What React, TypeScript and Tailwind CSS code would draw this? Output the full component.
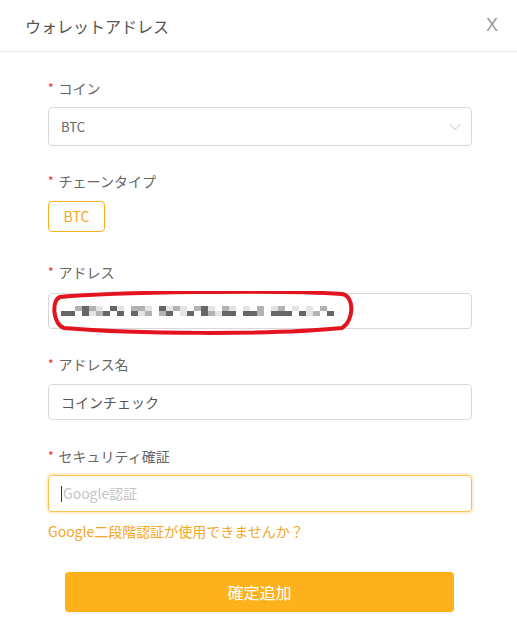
import React from 'react'

const font = { fontFamily: '"Noto Sans CJK JP", "Noto Sans", sans-serif' }

// blurred address: two rows of grey pixel blocks
const topRow = [0, 0, 2, 3, 2, 1, 0, 3, 1, 0, 2, 2, 1, 0, 3, 1, 2, 1, 0, 2, 3, 1, 0, 2, 1, 0, 1, 0, 2, 0, 1, 2, 0, 1, 0, 1, 0, 2]
const botRow = [3, 3, 0, 3, 1, 2, 3, 0, 3, 0, 3, 1, 2, 0, 2, 3, 0, 1, 3, 0, 3, 2, 1, 3, 3, 0, 3, 3, 2, 0, 3, 3, 3, 0, 3, 1, 2, 0, 3]
const shade = ['bg-transparent', 'bg-[#e4e4e4]', 'bg-[#b3b3b3]', 'bg-[#666666]']

function Label({ text }: { text: string }) {
  return (
    <div className="flex items-center h-5 text-[14px] text-[#666]">
      <span className="text-[#f5222d] text-[12px] mr-[5px]">*</span>
      {text}
    </div>
  )
}

export default function App() {
  return (
    <div className="w-[517px] h-[638px] bg-white overflow-hidden" style={font}>
      <div className="h-[52px] flex items-center justify-between pl-[25px] pr-[19px] border-b border-[#ebebeb]">
        <span className="text-[16px] text-[#555]">ウォレットアドレス</span>
        <span className="text-[18px] text-[#999]" style={{ fontFamily: '"Liberation Sans", sans-serif' }}>X</span>
      </div>

      <div className="pl-[48px] pr-[45px] pt-[26px]">
        <Label text="コイン" />
        <div className="mt-[9px] h-[39px] border border-[#d9d9d9] rounded-[4px] flex items-center justify-between pl-[12px] pr-[10px]">
          <span className="text-[13px] text-[#666]">BTC</span>
          <svg width="12" height="8" viewBox="0 0 12 8" fill="none" stroke="#c0c0c0" strokeWidth="1">
            <path d="M1 1.5 L6 6.5 L11 1.5" />
          </svg>
        </div>

        <div className="mt-[25px]">
          <Label text="チェーンタイプ" />
          <div className="mt-[10px] w-[57px] h-[31px] border border-[#fbb01b] rounded-[4px] flex items-center justify-center text-[14px] text-[#f5a623]">
            BTC
          </div>
        </div>

        <div className="mt-[30px]">
          <Label text="アドレス" />
          <div className="relative mt-[11px] h-[36px] border border-[#d9d9d9] rounded-[4px] flex flex-col justify-center pl-[12px]">
            <div className="flex">
              {topRow.map((s, i) => (
                <span key={i} className={`shrink-0 w-[7px] h-[5px] ${shade[s]}`} />
              ))}
            </div>
            <div className="flex">
              {botRow.map((s, i) => (
                <span key={i} className={`shrink-0 w-[7px] h-[5px] ${shade[s]}`} />
              ))}
            </div>
            <svg className="absolute left-[3px] top-[-3px]" width="304" height="44" viewBox="0 0 304 44" fill="none">
              <path d="M8 6 C 60 1, 230 -1, 290 3 C 303 5, 302 30, 290 37 C 220 44, 80 43, 12 37 C 1 34, -1 9, 8 6 Z" stroke="#e3131f" strokeWidth="4" />
            </svg>
          </div>
        </div>

        <div className="mt-[25px]">
          <Label text="アドレス名" />
          <div className="mt-[10px] h-[36px] border border-[#d9d9d9] rounded-[4px] flex items-center pl-[12px] text-[14px] text-[#555]">
            コインチェック
          </div>
        </div>

        <div className="mt-[26px]">
          <Label text="セキュリティ確証" />
          <div className="mt-[9px] h-[37px] border border-[#fbc04f] rounded-[4px] shadow-[0_0_0_2px_rgba(251,176,27,0.2)] flex items-center pl-[12px] text-[14px] text-[#c4c4c4]">
            <span className="w-px h-[16px] bg-[#333] mr-px" />
            Google認証
          </div>
        </div>

        <div className="mt-[9px] text-[14px] text-[#f5a623]">Google二段階認証が使用できませんか？</div>

        <div className="mt-[30px] pl-[17px] pr-[18px]">
          <button className="w-full h-[40px] rounded-[4px] bg-[#fdb11b] text-white text-[16px] shadow-[0_1px_2px_rgba(0,0,0,0.08)]">
            確定追加
          </button>
        </div>
      </div>
    </div>
  )
}
